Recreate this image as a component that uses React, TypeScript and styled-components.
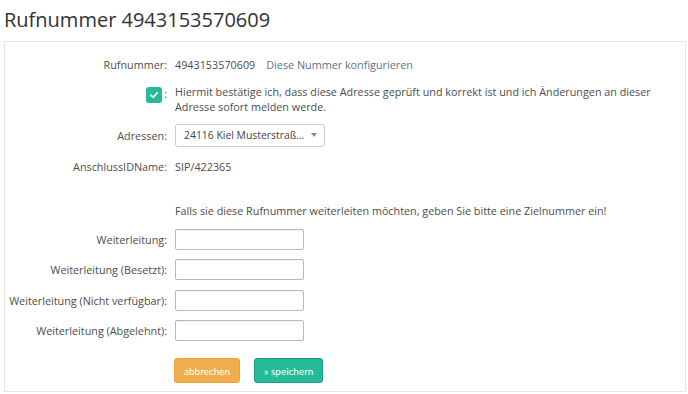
import React from "react"
import styled, { createGlobalStyle } from "styled-components"

const GlobalStyle = createGlobalStyle`
    body {
        margin: 0;
        background: #ffffff;
        font-family: "Open Sans", "Liberation Sans", sans-serif;
        color: #4d4d4d;
    }
`;

type Forward = {
    label: string;
}

const forwards: Forward[] = [
    { label: 'Weiterleitung:' },
    { label: 'Weiterleitung (Besetzt):' },
    { label: 'Weiterleitung (Nicht verfügbar):' },
    { label: 'Weiterleitung (Abgelehnt):' },
];

const CheckIcon = () => (
    <svg width="10" height="10" viewBox="0 0 10 10">
        <path d="M1.8 5.2 L4.1 7.4 L8.3 2.8" fill="none" stroke="#ffffff" strokeWidth="1.7" strokeLinecap="round" strokeLinejoin="round" />
    </svg>
)

export default function App() {
    return (
        <Page>
            <GlobalStyle />
            <Title>Rufnummer 4943153570609</Title>
            <Panel>
                <Row>
                    <Label>Rufnummer:</Label>
                    <Value>
                        4943153570609
                        <ConfigLink href="#">Diese Nummer konfigurieren</ConfigLink>
                    </Value>
                </Row>
                <Row $gap={12.5} $top>
                    <CheckLabel>
                        <CheckBox><CheckIcon /></CheckBox>
                        <Colon>:</Colon>
                    </CheckLabel>
                    <Value>
                        Hiermit bestätige ich, dass diese Adresse geprüft und korrekt ist und ich Änderungen an dieser<br />
                        Adresse sofort melden werde.
                    </Value>
                </Row>
                <Row $gap={9.5}>
                    <Label>Adressen:</Label>
                    <Select>
                        <SelectText>24116 Kiel Musterstraß...</SelectText>
                        <Caret />
                    </Select>
                </Row>
                <Row $gap={12.5}>
                    <Label>AnschlussIDName:</Label>
                    <Value>SIP/422365</Value>
                </Row>
                <Row $gap={29}>
                    <span />
                    <Value>Falls sie diese Rufnummer weiterleiten möchten, geben Sie bitte eine Zielnummer ein!</Value>
                </Row>
                {forwards.map((f, i) => (
                    <Row key={f.label} $gap={i === 0 ? 10.5 : 9.5}>
                        <Label>{f.label}</Label>
                        <div><TextInput type="text" /></div>
                    </Row>
                ))}
                <Row $gap={17}>
                    <span />
                    <Buttons>
                        <Button $variant="warning">abbrechen</Button>
                        <Button $variant="success">» speichern</Button>
                    </Buttons>
                </Row>
            </Panel>
        </Page>
    )
}

const Page = styled.div`
    width: 688px;
    box-sizing: border-box;
    padding: 0 2px 0 4px;
`;

const Title = styled.h1`
    margin: 0 0 8px 0;
    padding-top: 7px;
    font-size: 20px;
    line-height: 26px;
    font-weight: 400;
    color: #333333;
`;

const Panel = styled.div`
    border: 1px solid #e6e6e6;
    padding: 14.5px 0 8px 0;
    font-size: 10.8px;
    line-height: 15px;
`;

const Row = styled.div<{ $gap?: number; $top?: boolean }>`
    display: grid;
    grid-template-columns: 162px 1fr;
    column-gap: 8px;
    align-items: ${p => p.$top ? 'start' : 'center'};
    margin-top: ${p => p.$gap ?? 0}px;
`;

const Label = styled.div`
    text-align: right;
    white-space: nowrap;
`;

const Value = styled.div`
    color: #4d4d4d;
`;

const ConfigLink = styled.a`
    margin-left: 11px;
    color: #5a738e;
    text-decoration: none;
`;

const CheckLabel = styled.div`
    display: flex;
    justify-content: flex-end;
    align-items: flex-start;
`;

const CheckBox = styled.span`
    display: flex;
    align-items: center;
    justify-content: center;
    width: 16px;
    height: 16px;
    margin-top: 2.5px;
    border-radius: 3px;
    background: #26b99a;
`;

const Colon = styled.span`
    margin-left: 2px;
    line-height: 20px;
`;

const Select = styled.div`
    display: flex;
    align-items: center;
    justify-content: space-between;
    box-sizing: border-box;
    width: 150px;
    height: 23px;
    padding: 0 7px 0 8px;
    border: 1px solid #cccccc;
    border-radius: 3px;
    background: #ffffff;
`;

const SelectText = styled.span`
    color: #444444;
    font-size: 10.4px;
    white-space: nowrap;
    overflow: hidden;
`;

const Caret = styled.span`
    flex-shrink: 0;
    margin-left: 6px;
    width: 0;
    height: 0;
    border-left: 3.5px solid transparent;
    border-right: 3.5px solid transparent;
    border-top: 4px solid #888888;
`;

const TextInput = styled.input`
    display: block;
    box-sizing: border-box;
    width: 129px;
    height: 21px;
    margin: 0;
    border: 1px solid #b8b8b8;
    border-radius: 2px;
    box-shadow: inset 0 1px 1px rgba(0, 0, 0, 0.05);
    font: inherit;
`;

const Buttons = styled.div`
    display: flex;
    gap: 14px;
    margin-left: -1px;
`;

const Button = styled.button<{ $variant: 'warning' | 'success' }>`
    box-sizing: border-box;
    height: 25px;
    padding: 0 9px;
    border-radius: 3px;
    border: 1px solid ${p => p.$variant === 'warning' ? '#eea236' : '#169f85'};
    background: ${p => p.$variant === 'warning' ? '#f0ad4e' : '#26b99a'};
    color: #ffffff;
    font-family: Lato, "Open Sans", sans-serif;
    font-size: 10px;
    cursor: pointer;
`;
